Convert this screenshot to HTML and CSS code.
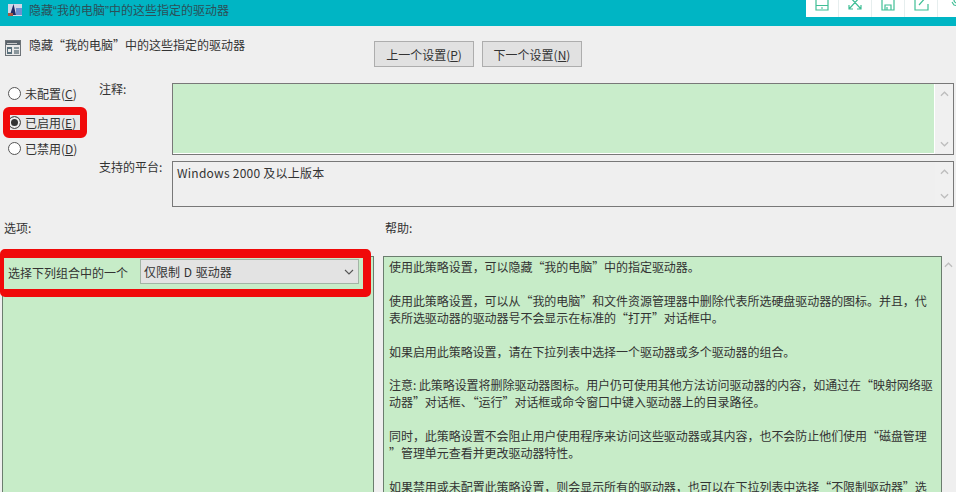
FILE: index.html
```html
<!DOCTYPE html>
<html lang="zh-CN">
<head>
<meta charset="utf-8">
<title>隐藏“我的电脑”中的这些指定的驱动器</title>
<link rel="stylesheet" href="styles.css">
</head>
<body>
<div class="window">
  <header class="titlebar">
    <svg class="title-icon" viewBox="0 0 14 14"><rect x="0" y="1" width="14" height="12" fill="#cfd6e6"/><path d="M2 12 5.5 1 8 12z" fill="#1e2a66"/><path d="M8 5h6v7H8z" fill="#6f8fd0"/><path d="M0 10h5v3H0z" fill="#a8553f"/></svg>
    <span class="title-text">隐藏“我的电脑”中的这些指定的驱动器</span>
    <div class="toolbar">
      <span class="tool"><svg viewBox="0 0 16 16"><path d="M2 -4h12v19H2zM2 10.5h12M7 13h2"/></svg></span>
      <span class="tool"><svg viewBox="0 0 16 16"><path d="M2 14 14 1M2 1l12 13M2 10v4h4M14 10v4h-4"/></svg></span>
      <span class="tool"><svg viewBox="0 0 16 16"><path d="M2 -3h12v18H2zM5 15V10h6v5M7 12v3"/></svg></span>
      <span class="tool"><svg viewBox="0 0 16 16"><path d="M9 4H2v11h13V9M6 10l8-9"/></svg></span>
      <span class="tool"><svg viewBox="0 0 16 16"><circle cx="10" cy="5" r="3"/><path d="M5 3l2-3M5 7l2 3 4 1 3-1 2-3"/></svg></span>
    </div>
  </header>
  <section class="heading">
    <svg class="heading-icon" viewBox="0 0 16 16"><rect x="0.5" y="0.5" width="15" height="15" fill="#e8e8e8" stroke="#6d7378"/><rect x="1" y="1" width="14" height="4" fill="#59626a"/><rect x="2" y="3" width="10" height="1" fill="#c8c8c8"/><rect x="2" y="7" width="5" height="7" fill="#59707c"/><rect x="3" y="9" width="3" height="3" fill="#e8e8e8"/><path d="M9 7h5v2H9zM9 10h5v4H9z" fill="#8b979c"/></svg>
    <span class="heading-text">隐藏“我的电脑”中的这些指定的驱动器</span>
    <div class="nav">
      <button class="btn">上一个设置(<u>P</u>)</button>
      <button class="btn">下一个设置(<u>N</u>)</button>
    </div>
  </section>
  <section class="config">
    <div class="radios">
      <label class="radio"><span class="dot"></span><span>未配置(<u>C</u>)</span></label>
      <label class="radio is-on"><span class="dot"></span><span>已启用(<u>E</u>)</span></label>
      <label class="radio"><span class="dot"></span><span>已禁用(<u>D</u>)</span></label>
    </div>
    <div class="fields">
      <div class="field note-field">
        <span class="field-label">注释:</span>
        <div class="box box-note">
          <div class="box-body"></div>
          <div class="scroll"><svg viewBox="0 0 10 6"><path d="M1 5 5 1l4 4"/></svg><svg viewBox="0 0 10 6"><path d="M1 1l4 4 4-4"/></svg></div>
        </div>
      </div>
      <div class="field platform-field">
        <span class="field-label">支持的平台:</span>
        <div class="box box-platform">
          <div class="box-body">Windows 2000 及以上版本</div>
          <div class="scroll"><svg viewBox="0 0 10 6"><path d="M1 5 5 1l4 4"/></svg><svg viewBox="0 0 10 6"><path d="M1 1l4 4 4-4"/></svg></div>
        </div>
      </div>
    </div>
  </section>
  <section class="columns">
    <div class="col col-options">
      <div class="col-title">选项:</div>
      <div class="options-panel">
        <div class="option-row">
          <span class="option-label">选择下列组合中的一个</span>
          <div class="combo"><span>仅限制 D 驱动器</span><svg viewBox="0 0 10 6"><path d="M1 1l4 4 4-4"/></svg></div>
        </div>
      </div>
    </div>
    <div class="col col-help">
      <div class="col-title">帮助:</div>
      <div class="help-wrap">
        <div class="help-panel">
          <p>使用此策略设置，可以隐藏“我的电脑”中的指定驱动器。</p>
          <p>使用此策略设置，可以从“我的电脑”和文件资源管理器中删除代表所选硬盘驱动器的图标。并且，代<br>表所选驱动器的驱动器号不会显示在标准的“打开”对话框中。</p>
          <p>如果启用此策略设置，请在下拉列表中选择一个驱动器或多个驱动器的组合。</p>
          <p>注意: 此策略设置将删除驱动器图标。用户仍可使用其他方法访问驱动器的内容，如通过在“映射网络驱<br>动器”对话框、“运行”对话框或命令窗口中键入驱动器上的目录路径。</p>
          <p>同时，此策略设置不会阻止用户使用程序来访问这些驱动器或其内容，也不会防止他们使用“磁盘管理<br>”管理单元查看并更改驱动器特性。</p>
          <p>如果禁用或未配置此策略设置，则会显示所有的驱动器，也可以在下拉列表中选择“不限制驱动器”选</p>
        </div>
        <div class="help-scroll"><svg viewBox="0 0 10 6"><path d="M1 5 5 1l4 4"/></svg></div>
      </div>
    </div>
  </section>
</div>
</body>
</html>
```
FILE: styles.css
```css
* { box-sizing: border-box; }
html, body { margin: 0; height: 100%; overflow: hidden; }
body {
  background: #efefef;
  color: #333;
  font: 12px/17px "Noto Sans CJK SC", "Noto Sans", sans-serif;
}
.window { width: 956px; height: 492px; display: flex; flex-direction: column; overflow: hidden; }

.titlebar { height: 26px; flex: none; background: #00b5c4; display: flex; align-items: flex-start; padding-left: 8px; }
.title-icon { width: 14px; height: 14px; margin-top: 3px; flex: none; }
.title-text { margin: 3px 0 0 7px; line-height: 17px; color: #2c4f58; font-family: "Liberation Sans", "Noto Sans CJK SC", sans-serif; }
.toolbar { margin-left: auto; height: 17px; width: 150px; background: #fff; display: flex; }
.tool { width: 33px; flex: none; border-right: 1px solid #e6eeee; display: flex; justify-content: center; }
.tool:last-child { border-right: 0; }
.tool svg { width: 16px; height: 16px; margin-top: -5px; fill: none; stroke: #3fbe95; stroke-width: 1.2; overflow: hidden; }

.heading { height: 43px; flex: none; display: flex; align-items: flex-start; padding-left: 5px; }
.heading-icon { width: 16px; height: 16px; margin-top: 14px; flex: none; }
.heading-text { margin: 10px 0 0 8px; line-height: 17px; }
.nav { display: flex; gap: 8px; margin: 15px 0 0 auto; padding-right: 374px; }
.btn {
  width: 100px; height: 26px; padding: 0;
  background: #e1e1e1; border: 1px solid #adadad; color: #333;
  font: inherit; font-size: 12px;
}

.config { height: 137px; flex: none; display: flex; padding-top: 14px; }
.radios { width: 94px; flex: none; display: flex; flex-direction: column; padding-left: 3px; }
.radio {
  display: flex; align-items: center; gap: 4px;
  height: 24px; width: 84px; padding-left: 5px;
  color: #333; white-space: nowrap;
}
.radio:first-child { margin: -2px 0 2px; }
.dot { width: 13px; height: 13px; border-radius: 50%; background: #fff; border: 1px solid #555; flex: none; }
.is-on {
  height: 31px; margin: 0 0 -3px;
  border: solid #f00a0a; border-width: 8px 7px; padding-left: 0; border-radius: 6px;
  background: #e8e8e8; background-clip: padding-box;
  overflow: hidden;
}
.is-on + .radio { margin-top: 1px; }
.is-on .dot { margin-left: -2px; background: #333; box-shadow: inset 0 0 0 2px #eee; }

.fields { flex: 1; display: flex; flex-direction: column; gap: 6px; padding-left: 5px; }
.field { display: flex; }
.field-label { width: 73px; flex: none; margin-top: -3px; }
.box { width: 782px; display: flex; border: 1px solid #787878; }
.box-note { height: 72px; }
.box-platform { height: 46px; }
.box-note .box-body { background: #c9edcb; border-right: 1px solid #fff; border-bottom: 1px solid #fff; }
.box-body { flex: 1; padding: 2px 4px; color: #333; letter-spacing: 0.25px; }
.scroll { width: 18px; flex: none; display: flex; flex-direction: column; justify-content: space-between; align-items: center; padding: 7px 0; background: #f0f0f0; }
.scroll svg, .help-scroll svg { width: 9px; height: 6px; fill: none; stroke: #bdbdbd; stroke-width: 1.4; }

.columns { flex: 1; display: flex; padding-left: 2px; min-height: 0; }
.col-title { height: 50px; padding-top: 13px; padding-left: 2px; }
.col-options { width: 372px; flex: none; }
.col-help { margin-left: 9px; flex: 1; }
.options-panel { height: 240px; background: #c7ecc8; border: 1px solid #6b7d6e; position: relative; }
.option-row {
  position: absolute; left: -3px; top: -8px; width: 371px; height: 48px;
  border: solid #f00a0a; border-width: 9px 8px 8px 4px; border-radius: 5px;
  background: #c7ecc8; background-clip: padding-box;
  display: flex; align-items: center; padding-left: 4px;
}
.option-label { width: 132px; flex: none; margin-top: -3px; }
.combo {
  width: 219px; height: 25px; margin-top: -4px;
  background: #e3e3e3; border: 1px solid #a3b5a6;
  display: flex; align-items: center; justify-content: space-between; padding: 0 4px 0 3px;
  word-spacing: 1px;
}
.combo svg { width: 10px; height: 6px; fill: none; stroke: #555; stroke-width: 1.1; }
.help-wrap { display: flex; height: 240px; }
.help-panel {
  width: 559px; height: 240px; overflow: hidden;
  background: #c7ecc8; border: 1px solid #6b7d6e; padding: 2px 5px;
  line-height: 16.9px; letter-spacing: -0.05px;
}
.help-panel p { margin: 0 0 16.9px; white-space: nowrap; }
.help-scroll { flex: 1; display: flex; justify-content: center; padding-top: 6px; padding-right: 1px; }
```
